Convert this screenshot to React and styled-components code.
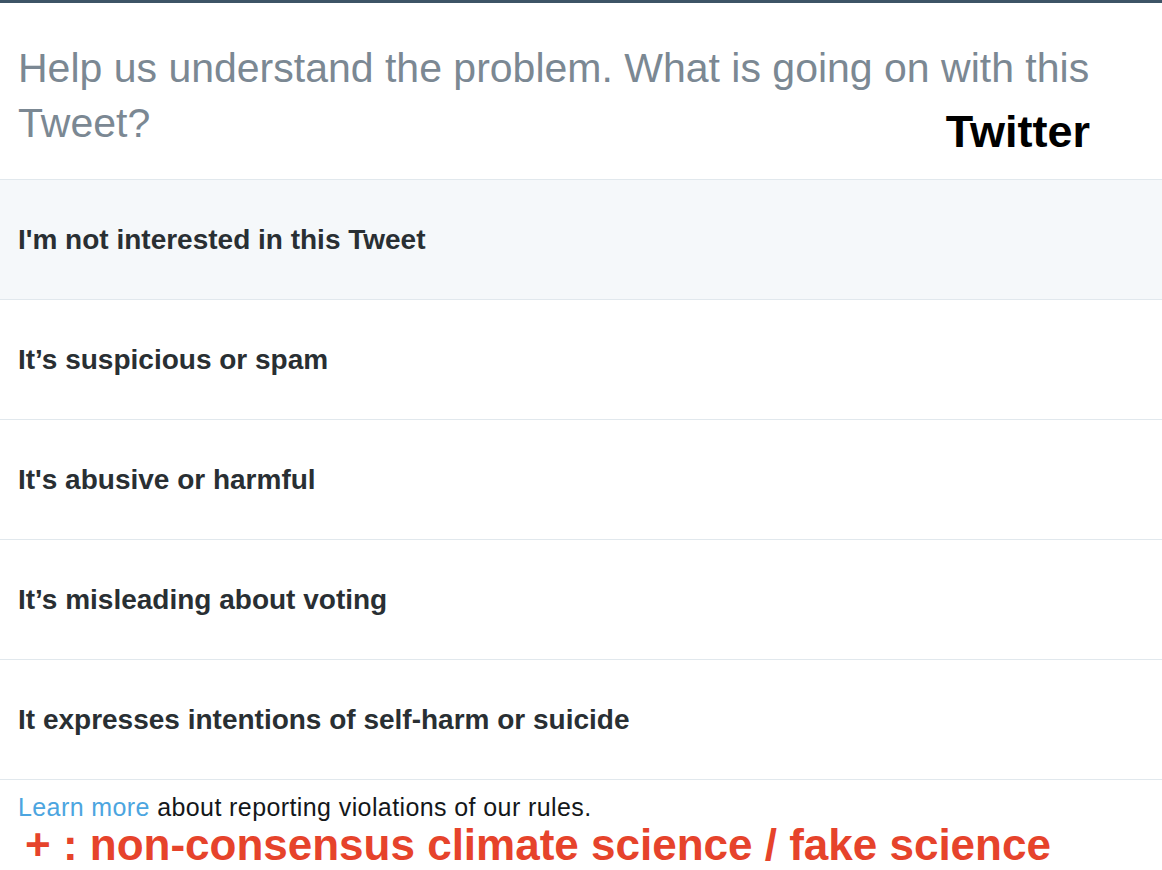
import React from 'react';
import styled, { createGlobalStyle } from 'styled-components';

const GlobalStyle = createGlobalStyle`
    html, body {
        margin: 0;
        padding: 0;
        background: #ffffff;
    }

    body {
        font-family: "Liberation Sans", Arial, Helvetica, sans-serif;
    }
`

const Page = styled.div`
    width: 1162px;
    height: 870px;
    overflow: hidden;
    border-top: 3px solid #3d5466;
    box-sizing: border-box;
    background: #fff;
`

const Header = styled.header`
    padding: 38px 18px 25px 18px;
    border-bottom: 1px solid #e1e8ed;
`

const Question = styled.h2`
    margin: 0;
    font-size: 41px;
    font-weight: 400;
    line-height: 55px;
    color: #7b8893;
`

const LastLine = styled.div`
    display: flex;
    justify-content: space-between;
    align-items: flex-start;
    padding-right: 54px;
`

const Brand = styled.span`
    margin-top: 13px;
    font-size: 45px;
    line-height: 45px;
    font-weight: 700;
    color: #000;
`

const List = styled.ul`
    list-style: none;
    margin: 0;
    padding: 0;
`

const Option = styled.li`
    display: flex;
    align-items: center;
    box-sizing: border-box;
    height: 120px;
    padding: 1px 18px 0 18px;
    border-bottom: 1px solid #e1e8ed;
    background: ${props => props.active ? '#f5f8fa' : '#fff'};
    font-size: 28px;
    font-weight: 700;
    color: #292f33;
    cursor: pointer;
`

const Footer = styled.div`
    padding: 14px 18px 0 18px;
    font-size: 25px;
    line-height: 26px;
    letter-spacing: 0.4px;
    color: #14171a;

    a {
        color: #4ca5e0;
        text-decoration: none;
    }
`

const Note = styled.div`
    margin-top: 3px;
    padding-left: 25px;
    font-size: 44px;
    font-weight: 700;
    line-height: 44px;
    color: #e6432b;
`

const options = [
    "I'm not interested in this Tweet",
    "It\u2019s suspicious or spam",
    "It's abusive or harmful",
    "It\u2019s misleading about voting",
    "It expresses intentions of self-harm or suicide",
]

export default function App() {
    return (
        <>
            <GlobalStyle />
            <Page>
                <Header>
                    <Question>
                        <div>Help us understand the problem. What is going on with this</div>
                        <LastLine>
                            <span>Tweet?</span>
                            <Brand>Twitter</Brand>
                        </LastLine>
                    </Question>
                </Header>
                <List>
                    {options.map((text, key) => (
                        <Option key={key} active={key === 0}>{text}</Option>
                    ))}
                </List>
                <Footer>
                    <a href="#">Learn more</a> about reporting violations of our rules.
                </Footer>
                <Note>+ : non-consensus climate science / fake science</Note>
            </Page>
        </>
    )
}
